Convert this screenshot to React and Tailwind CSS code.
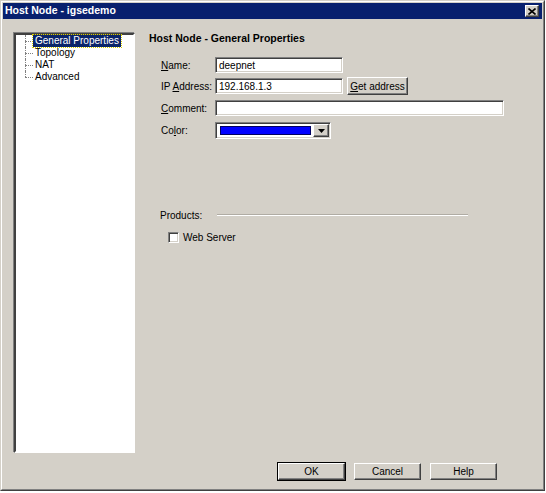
const sunken =
  "border border-t-[#808080] border-l-[#808080] border-r-white border-b-white shadow-[inset_1px_1px_0_#404040,inset_-1px_-1px_0_#d4d0c8]";
const raised =
  "border border-t-white border-l-white border-r-[#404040] border-b-[#404040] shadow-[inset_-1px_-1px_0_#808080,inset_1px_1px_0_#d4d0c8]";

const treeItems = ["General Properties", "Topology", "NAT", "Advanced"];

function TreeRow({ label, selected, last }) {
  return (
    <div className="flex h-[12px] items-stretch">
      <div className="ml-[9px] flex w-[8px] flex-col">
        <div className="h-[6px] border-l border-dotted border-[#808080]" />
        <div
          className={`h-[6px] border-t border-dotted border-[#808080] ${
            last ? "" : "border-l"
          }`}
        />
      </div>
      <span
        className={`flex items-center px-[2px] leading-none ${
          selected
            ? "bg-[#0a246a] text-white outline outline-1 outline-dotted outline-[#d8d000]"
            : "text-black"
        }`}
      >
        {label}
      </span>
    </div>
  );
}

function Field({ width, value = "" }) {
  return (
    <div
      className={`${sunken} flex h-[16px] items-center bg-white px-[3px]`}
      style={{ width }}
    >
      {value}
    </div>
  );
}

function Label({ children }) {
  return <div className="w-[54px] shrink-0">{children}</div>;
}

function Button({ children, isDefault }) {
  return (
    <div
      className={`flex h-[17px] w-[67px] items-center justify-center ${
        isDefault ? "outline outline-1 outline-black" : ""
      } ${raised} bg-[#d4d0c8]`}
    >
      {children}
    </div>
  );
}

export default function App() {
  return (
    <div
      className="h-[491px] w-[545px] border border-t-[#d4d0c8] border-l-[#d4d0c8] border-r-[#404040] border-b-[#404040] bg-[#d4d0c8] text-[10px] text-black"
      style={{ fontFamily: '"Liberation Sans", Arial, sans-serif' }}
    >
      <div className="flex h-full flex-col border border-white border-r-[#808080] border-b-[#808080] p-[1px]">
        {/* Title bar */}
        <div className="flex h-[16px] items-center justify-between bg-[#08206e] pl-[2px] pr-[3px]">
          <span className="text-[10.5px] font-bold text-white">
            Host Node - igsedemo
          </span>
          <div
            className={`${raised} flex h-[12px] w-[14px] items-center justify-center bg-[#d4d0c8]`}
          >
            <svg width="8" height="7" viewBox="0 0 8 7">
              <path
                d="M0.5 0.5 L7.5 6.5 M7.5 0.5 L0.5 6.5"
                stroke="black"
                strokeWidth="1.6"
              />
            </svg>
          </div>
        </div>

        {/* Body */}
        <div className="flex pl-[11px] pt-[14px]">
          <div className="h-[420px] w-[121px] border-2 border-t-[#404040] border-l-[#404040] border-r-white border-b-white bg-white shadow-[-1px_-1px_0_#808080] text-[10px]">
            {treeItems.map((t, i) => (
              <TreeRow
                key={t}
                label={t}
                selected={i === 0}
                last={i === treeItems.length - 1}
              />
            ))}
          </div>

          <div className="ml-[14px] flex flex-col">
            <div className="flex h-[12px] items-center text-[10.5px] font-bold">
              Host Node - General Properties
            </div>

            <div className="ml-[12px] flex flex-col">
              <div className="mt-[12px] flex items-center">
                <Label>
                  <u>N</u>ame:
                </Label>
                <Field width={128} value="deepnet" />
              </div>

              <div className="mt-[4px] flex h-[18px] items-center">
                <Label>
                  IP <u>A</u>ddress:
                </Label>
                <Field width={128} value="192.168.1.3" />
                <div
                  className={`${raised} ml-[4px] flex h-[18px] w-[61px] items-center justify-center bg-[#d4d0c8]`}
                >
                  <span>
                    <u>G</u>et address
                  </span>
                </div>
              </div>

              <div className="mt-[5px] flex items-center">
                <Label>
                  <u>C</u>omment:
                </Label>
                <Field width={289} />
              </div>

              <div className="mt-[6px] flex items-center">
                <Label>
                  Co<u>l</u>or:
                </Label>
                <div
                  className={`${sunken} flex h-[17px] w-[116px] items-center justify-between bg-white pl-[4px] pr-[1px]`}
                >
                  <div className="h-[9px] w-[91px] border border-[#000060] bg-[#0000ff]" />
                  <div
                    className={`${raised} flex h-[13px] w-[16px] items-center justify-center bg-[#d4d0c8]`}
                  >
                    <svg width="7" height="4" viewBox="0 0 7 4">
                      <path d="M0 0 H7 L3.5 4 Z" fill="black" />
                    </svg>
                  </div>
                </div>
              </div>
            </div>

            <div className="ml-[11px] mt-[70px] flex h-[12px] items-center">
              <div className="w-[57px]">Products:</div>
              <div className="h-[2px] w-[251px] border-t border-b border-t-[#b0aca4] border-b-white" />
            </div>

            <div className="ml-[19px] mt-[10px] flex h-[13px] items-center">
              <div className={`${sunken} h-[11px] w-[11px] bg-white`} />
              <span className="ml-[4px]">Web Server</span>
            </div>
          </div>
        </div>

        {/* Buttons */}
        <div className="mt-[10px] flex justify-end gap-[9px] pr-[45px]">
          <Button isDefault>OK</Button>
          <Button>Cancel</Button>
          <Button>Help</Button>
        </div>
      </div>
    </div>
  );
}
